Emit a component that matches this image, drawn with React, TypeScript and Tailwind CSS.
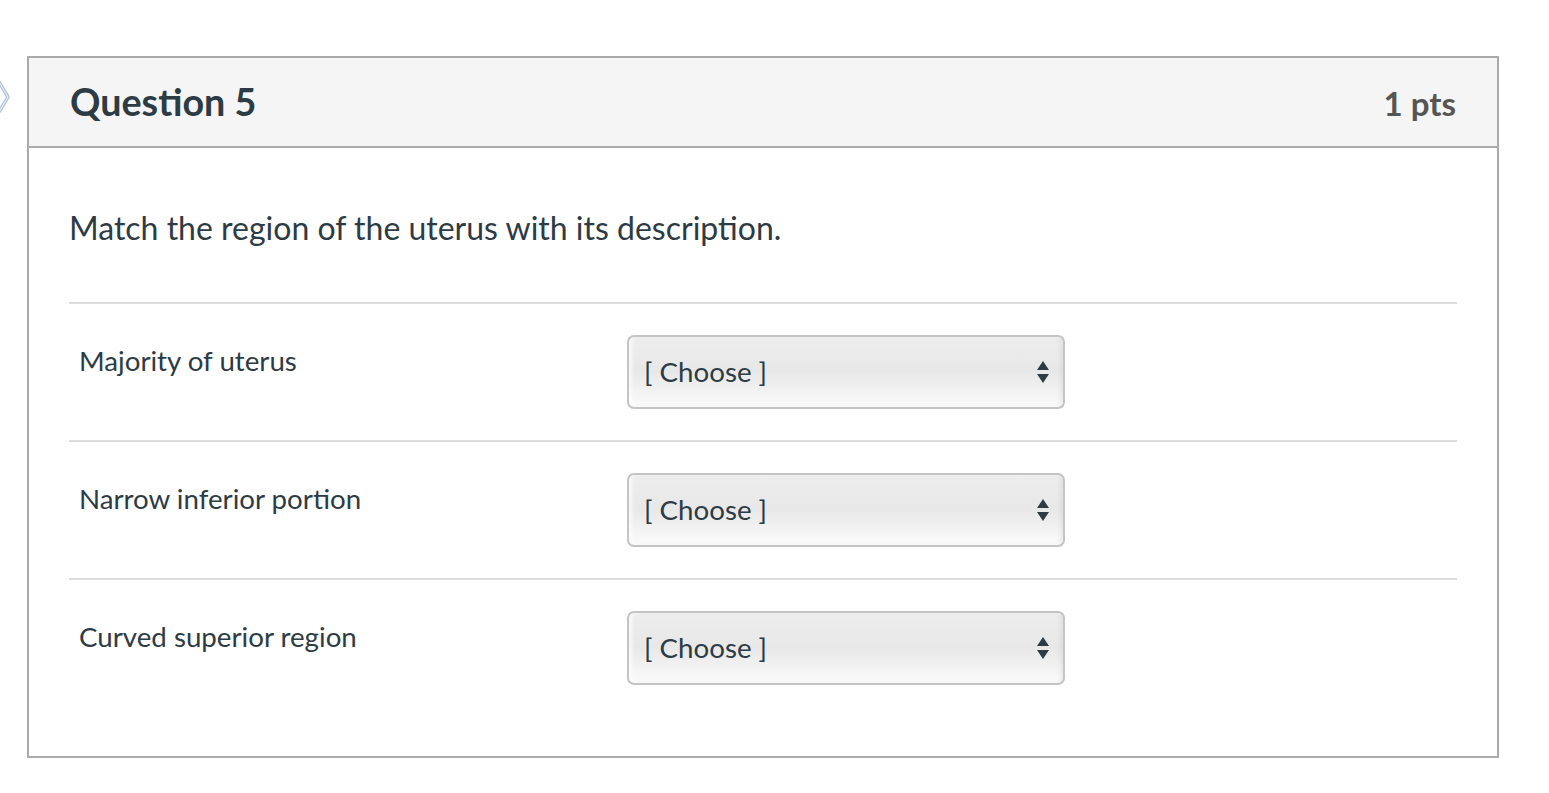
const rows = ['Majority of uterus', 'Narrow inferior portion', 'Curved superior region'];

const SelectArrows = () => (
    <svg width="14" height="28" viewBox="0 0 14 28" className="shrink-0">
        <path d="M7 3 L13 12 L1 12 Z" fill="#2d3b45" />
        <path d="M1 16 L13 16 L7 25 Z" fill="#2d3b45" />
    </svg>
);

const ChooseSelect = () => (
    <div className="w-[438px] h-[74px] flex items-center justify-between pl-[15px] pr-[13px] rounded-[7px] border-2 border-[#c4c4c4] bg-gradient-to-b from-[#ededed] via-[#e8e8e8] to-[#fbfbfb] shadow-[inset_3px_0_4px_rgba(255,255,255,0.7),inset_-3px_0_4px_rgba(0,0,0,0.05)]">
        <span className="text-[27.7px] text-[#2d3b45]">[ Choose ]</span>
        <SelectArrows />
    </div>
);

export default function App() {
    return (
        <div className="relative min-h-screen bg-white font-['Lato',sans-serif] pt-[56px] pl-[27px]">
            {/* side pointer, cut off by the window edge */}
            <svg width="14" height="40" viewBox="0 0 14 40" className="absolute left-0 top-[78px]">
                <path d="M-1 4 L8 19 L-1 34" fill="none" stroke="#b3c3d1" strokeWidth="3.5" strokeLinejoin="round" />
                <path d="M-1 4 L8 19 L-1 34" fill="none" stroke="#e4ebf1" strokeWidth="1.2" strokeLinejoin="round" />
            </svg>

            <div className="w-[1472px] border-2 border-[#aaaaaa]">
                {/* header */}
                <div className="h-[90px] flex items-center justify-between px-[41px] bg-[#f5f5f5] border-b-2 border-[#aaaaaa]">
                    <h2 className="text-[37.7px] font-bold text-[#2d3b45]">Question 5</h2>
                    <span className="mt-[3px] text-[33px] font-bold text-[#555555]">1 pts</span>
                </div>

                {/* body */}
                <div className="px-[40px] pt-[56px] pb-[40px]">
                    <p className="text-[32px] text-[#2d3b45] leading-[1.5] mb-[50px]">Match the region of the uterus with its description.</p>

                    {rows.map((label) => (
                        <div key={label} className="flex items-start border-t-2 border-[#dddddd] pt-[31px] pb-[31px]">
                            <div className="w-[558px] pl-[10px] pt-[5px] text-[27.7px] leading-[1.5] text-[#2d3b45]">{label}</div>
                            <ChooseSelect />
                        </div>
                    ))}
                </div>
            </div>
        </div>
    );
}
